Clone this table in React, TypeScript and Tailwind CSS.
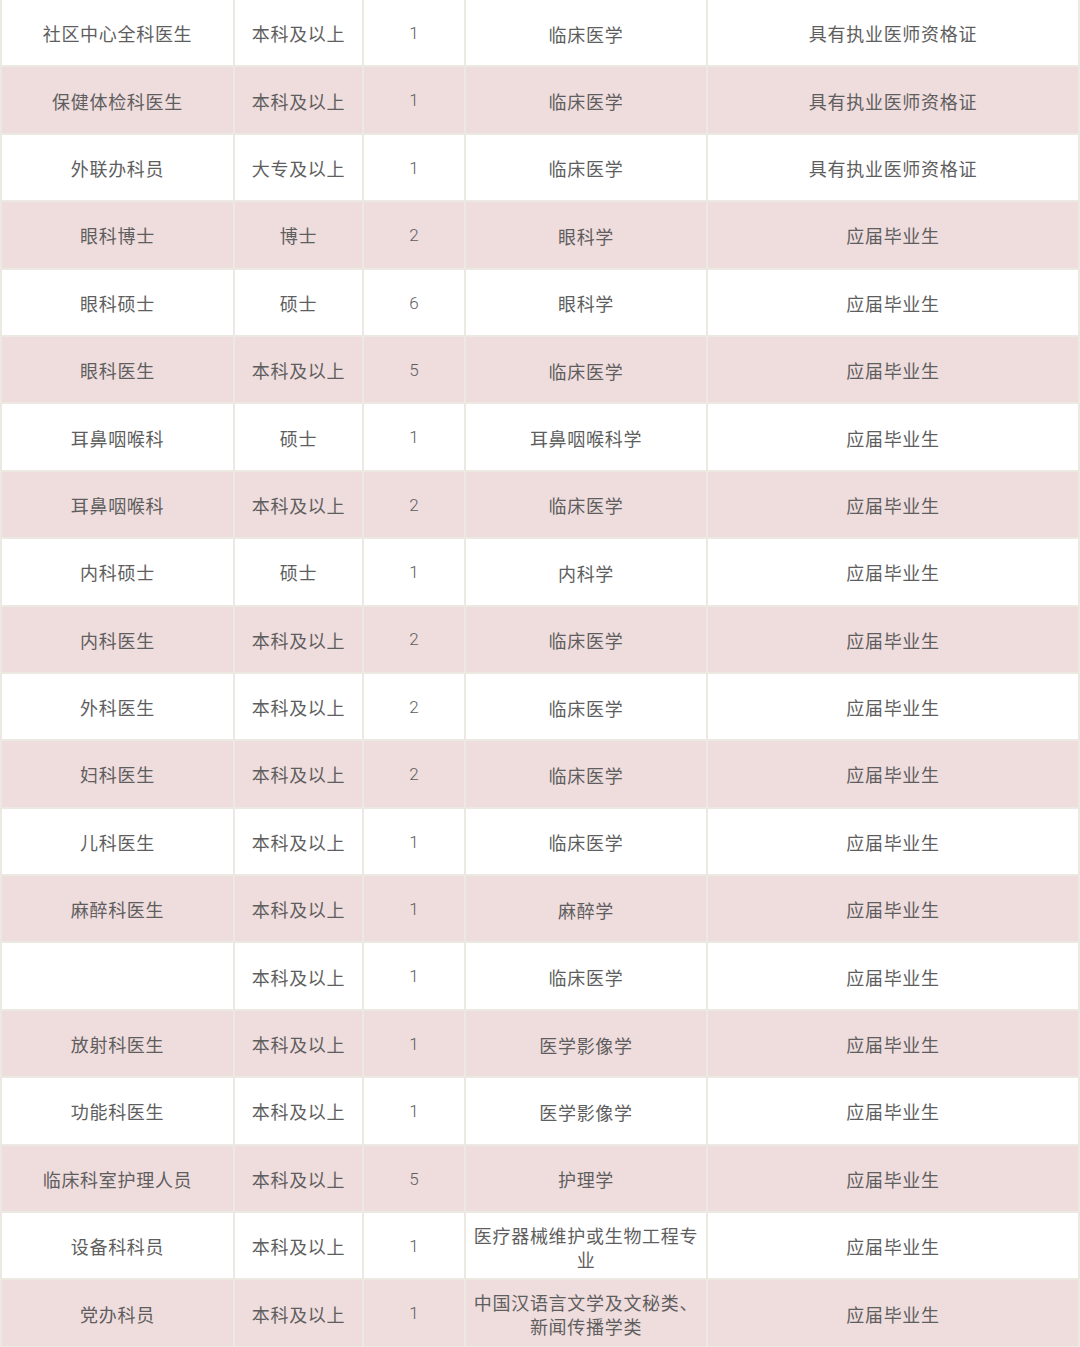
import React from 'react';

type Row = {
  post: string;
  edu: string;
  num: string;
  major: string[];
  req: string;
};

const rows: Row[] = [
  { post: '社区中心全科医生', edu: '本科及以上', num: '1', major: ['临床医学'], req: '具有执业医师资格证' },
  { post: '保健体检科医生', edu: '本科及以上', num: '1', major: ['临床医学'], req: '具有执业医师资格证' },
  { post: '外联办科员', edu: '大专及以上', num: '1', major: ['临床医学'], req: '具有执业医师资格证' },
  { post: '眼科博士', edu: '博士', num: '2', major: ['眼科学'], req: '应届毕业生' },
  { post: '眼科硕士', edu: '硕士', num: '6', major: ['眼科学'], req: '应届毕业生' },
  { post: '眼科医生', edu: '本科及以上', num: '5', major: ['临床医学'], req: '应届毕业生' },
  { post: '耳鼻咽喉科', edu: '硕士', num: '1', major: ['耳鼻咽喉科学'], req: '应届毕业生' },
  { post: '耳鼻咽喉科', edu: '本科及以上', num: '2', major: ['临床医学'], req: '应届毕业生' },
  { post: '内科硕士', edu: '硕士', num: '1', major: ['内科学'], req: '应届毕业生' },
  { post: '内科医生', edu: '本科及以上', num: '2', major: ['临床医学'], req: '应届毕业生' },
  { post: '外科医生', edu: '本科及以上', num: '2', major: ['临床医学'], req: '应届毕业生' },
  { post: '妇科医生', edu: '本科及以上', num: '2', major: ['临床医学'], req: '应届毕业生' },
  { post: '儿科医生', edu: '本科及以上', num: '1', major: ['临床医学'], req: '应届毕业生' },
  { post: '麻醉科医生', edu: '本科及以上', num: '1', major: ['麻醉学'], req: '应届毕业生' },
  { post: '', edu: '本科及以上', num: '1', major: ['临床医学'], req: '应届毕业生' },
  { post: '放射科医生', edu: '本科及以上', num: '1', major: ['医学影像学'], req: '应届毕业生' },
  { post: '功能科医生', edu: '本科及以上', num: '1', major: ['医学影像学'], req: '应届毕业生' },
  { post: '临床科室护理人员', edu: '本科及以上', num: '5', major: ['护理学'], req: '应届毕业生' },
  { post: '设备科科员', edu: '本科及以上', num: '1', major: ['医疗器械维护或生物工程专', '业'], req: '应届毕业生' },
  { post: '党办科员', edu: '本科及以上', num: '1', major: ['中国汉语言文学及文秘类、', '新闻传播学类'], req: '应届毕业生' },
];

const Cell: React.FC<{ bg: string; children: React.ReactNode }> = ({ bg, children }) => (
  <div className={`${bg} flex flex-col items-center justify-center text-center px-1 pt-[2px]`}>{children}</div>
);

const App: React.FC = () => {
  return (
    <div
      className="w-[1080px] h-[1347px] bg-[#ece8e2] overflow-hidden text-[#5e5e5e] text-[18px] tracking-[0.7px]"
      style={{ fontFamily: '"Noto Sans CJK SC", "Noto Sans", sans-serif' }}
    >
      <div className="flex flex-col gap-[2px] px-[2px]">
        {rows.map((r, i) => {
          const bg = i % 2 === 1 ? 'bg-[#efdcdd]' : 'bg-white';
          return (
            <div
              key={i}
              className="grid grid-cols-[231px_127px_100px_240px_370px] gap-[2px] h-[65.4px]"
            >
              <Cell bg={bg}>{r.post}</Cell>
              <Cell bg={bg}>{r.edu}</Cell>
              <Cell bg={bg}>
                <span className="text-[17px] font-light tracking-normal font-[Roboto,sans-serif]">{r.num}</span>
              </Cell>
              <Cell bg={bg}>
                {r.major.map((m, j) => (
                  <div key={j} className="leading-[24px] whitespace-nowrap">
                    {m}
                  </div>
                ))}
              </Cell>
              <Cell bg={bg}>{r.req}</Cell>
            </div>
          );
        })}
      </div>
    </div>
  );
};

export default App;
